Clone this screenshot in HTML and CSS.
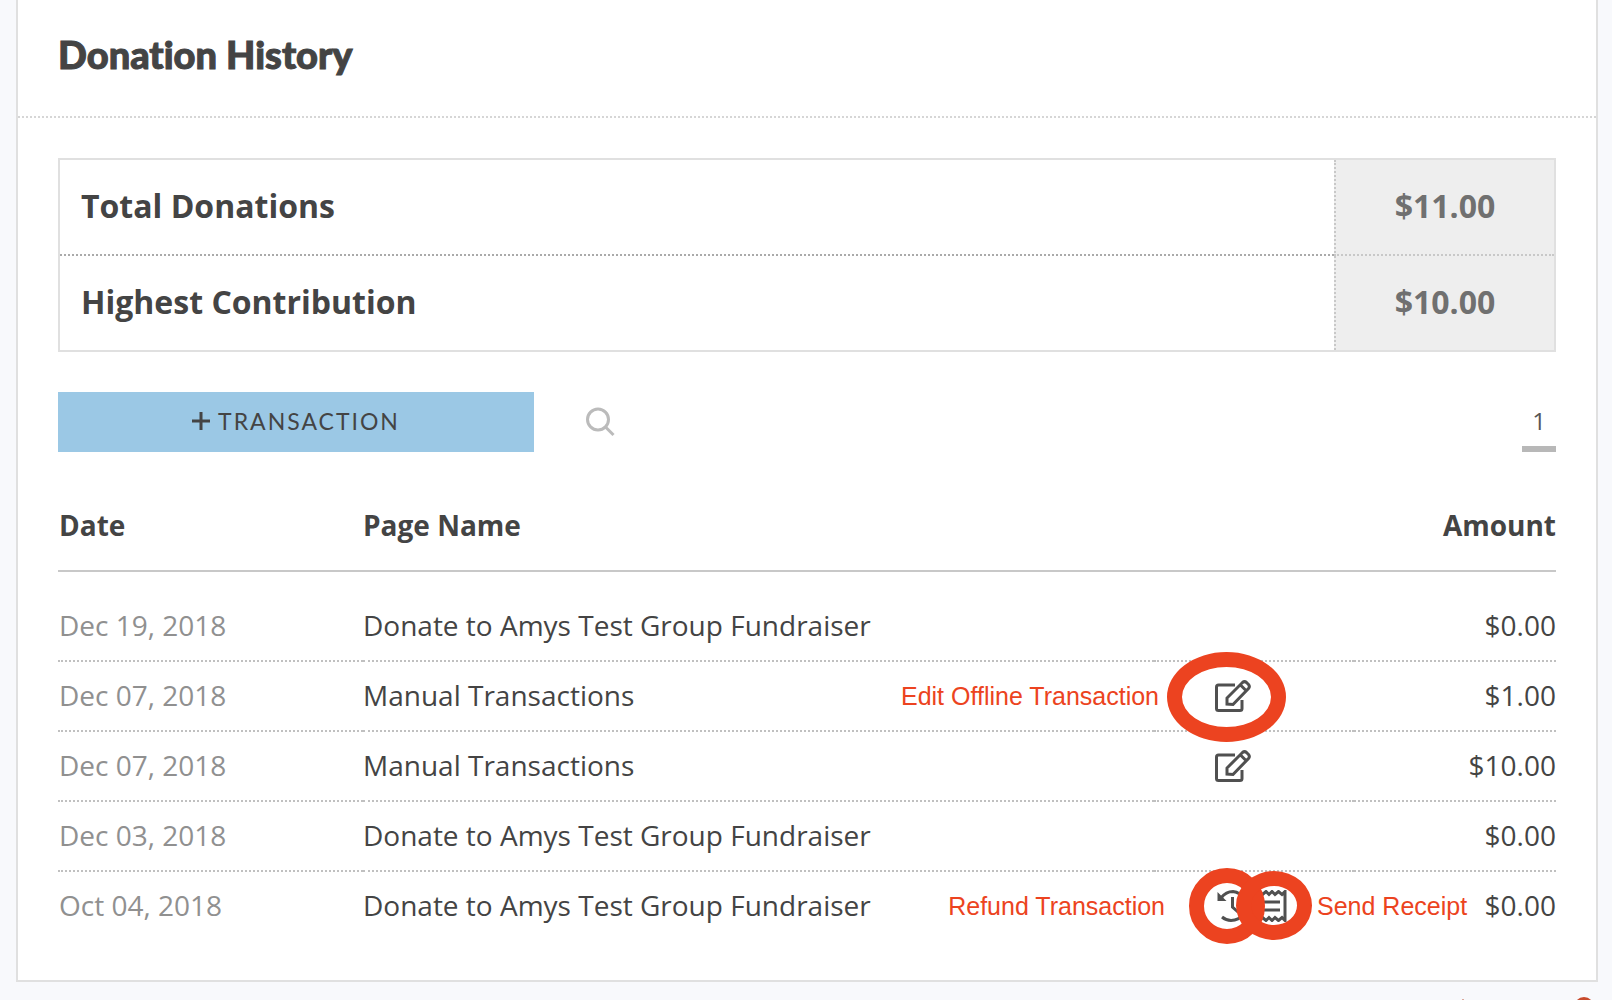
FILE: index.html
```html
<!DOCTYPE html>
<html lang="en">
<head>
  <meta charset="UTF-8">
  <meta name="viewport" content="width=device-width, initial-scale=1.0">
  <title>Donation History</title>
  <link rel="stylesheet" href="styles.css">
</head>
<body>
  <svg class="sprite" aria-hidden="true">
    <symbol id="icon-edit" viewBox="0 0 36 32">
      <path d="M20 5H3.500Q1.500 5 1.500 7V28.500Q1.500 30.500 3.500 30.500H25Q27 30.500 27 28.500V20" />
      <path d="M12 24V18L27.500 2.500Q29.500 .800 31.500 2.500L33.500 4.500Q35.200 6.500 33.500 8.500L18 24.500Z M25.500 5L31 10.500" />
    </symbol>
    <symbol id="icon-refund" viewBox="-2 0 34 32">
      <path d="M4 8Q9 1.500 16 1.500A14.500 14.500 0 1 1 5 27" />
      <path d="M15.500 7V17L21 22" />
      <path class="solid" d="M.500 2V11H9.500Z" />
    </symbol>
    <symbol id="icon-receipt" viewBox="0 0 30 32">
      <path d="M2 1.500L5.500 4.500L9 1.500L12 4.500L15 1.500L18 4.500L21.500 1.500L25 4.500L28 1.500V30.500L25 27.500L21.500 30.500L18 27.500L15 30.500L12 27.500L9 30.500L5.500 27.500L2 30.500Z" />
      <path d="M7 12H23M7 20H23" />
    </symbol>
  </svg>

  <main class="card">
    <header class="card-header">
      <h1>Donation History</h1>
    </header>

    <div class="card-body">
      <table class="summary">
        <tr>
          <th scope="row">Total Donations</th>
          <td>$11.00</td>
        </tr>
        <tr>
          <th scope="row">Highest Contribution</th>
          <td>$10.00</td>
        </tr>
      </table>

      <div class="toolbar">
        <button class="add-btn" type="button">
          <svg class="plus" viewBox="0 0 18 18" aria-hidden="true"><path d="M9 0V18M0 9H18" /></svg>
          TRANSACTION
        </button>
        <button class="search-btn" type="button" aria-label="Search">
          <svg viewBox="0 0 30 30" aria-hidden="true"><circle cx="12" cy="12.500" r="10.500" /><path d="M19.500 20L27.500 28" /></svg>
        </button>
        <nav class="pager">
          <a href="#">1</a>
        </nav>
      </div>

      <table class="history">
        <thead>
          <tr>
            <th class="date">Date</th>
            <th class="page">Page Name</th>
            <th class="actions"></th>
            <th class="amount">Amount</th>
          </tr>
        </thead>
        <tbody>
          <tr>
            <td class="date">Dec 19, 2018</td>
            <td class="page">Donate to Amys Test Group Fundraiser</td>
            <td class="actions"></td>
            <td class="amount">$0.00</td>
          </tr>
          <tr>
            <td class="date">Dec 07, 2018</td>
            <td class="page">Manual Transactions</td>
            <td class="actions">
              <div class="action-list">
                <button type="button" aria-label="Edit"><svg class="icon edit"><use href="#icon-edit" /></svg></button>
                <span class="ring ring-edit"></span>
                <span class="note note-edit">Edit Offline Transaction</span>
              </div>
            </td>
            <td class="amount">$1.00</td>
          </tr>
          <tr>
            <td class="date">Dec 07, 2018</td>
            <td class="page">Manual Transactions</td>
            <td class="actions">
              <div class="action-list">
                <button type="button" aria-label="Edit"><svg class="icon edit"><use href="#icon-edit" /></svg></button>
              </div>
            </td>
            <td class="amount">$10.00</td>
          </tr>
          <tr>
            <td class="date">Dec 03, 2018</td>
            <td class="page">Donate to Amys Test Group Fundraiser</td>
            <td class="actions"></td>
            <td class="amount">$0.00</td>
          </tr>
          <tr>
            <td class="date">Oct 04, 2018</td>
            <td class="page">Donate to Amys Test Group Fundraiser</td>
            <td class="actions">
              <div class="action-list">
                <button type="button" aria-label="Refund"><svg class="icon refund"><use href="#icon-refund" /></svg></button>
                <button type="button" aria-label="Send receipt"><svg class="icon receipt"><use href="#icon-receipt" /></svg></button>
                <span class="ring ring-refund"></span>
                <span class="ring ring-receipt"></span>
                <span class="note note-refund">Refund Transaction</span>
                <span class="note note-receipt">Send Receipt</span>
              </div>
            </td>
            <td class="amount">$0.00</td>
          </tr>
        </tbody>
      </table>
    </div>
  </main>

  <footer class="footer">
    <span class="tick"></span>
    <span class="badge"></span>
  </footer>
</body>
</html>
```
FILE: styles.css
```css
* {
  box-sizing: border-box;
}

body {
  margin: 0;
  background-color: #f8f9fc;
  color: #444;
  font-family: "Open Sans", Arial, sans-serif;
  font-size: 28px;
  line-height: 38px;
}

button {
  padding: 0;
  border: none;
  background: none;
  color: inherit;
  cursor: pointer;
}

svg {
  display: block;
  fill: none;
  stroke: #505050;
  stroke-width: 3px;
}

.sprite {
  position: absolute;
  width: 0;
  height: 0;
}

.solid {
  fill: #505050;
  stroke: none;
}

.card {
  margin: 0 14px 0 16px;
  background-color: #fff;
  border: 2px solid #e0e0e0;
  border-top: none;
}

.card-header {
  padding: 30px 40px 38px;
  border-bottom: 2px dotted #d6d6d6;
}

h1 {
  margin: 0;
  font-family: "Lato Black", Lato, sans-serif;
  font-size: 38px;
  font-weight: 900;
  font-variant-ligatures: none;
  line-height: 48px;
  -webkit-text-stroke: 1px #444;
}

.card-body {
  padding: 40px;
}

table {
  width: 100%;
  border-spacing: 0;
}

th, td {
  padding: 0;
  text-align: left;
}

.summary {
  border: 2px solid #e0e0e0;
  font-size: 32px;
}

.summary th, .summary td {
  height: 94px;
  padding-bottom: 2px;
  font-weight: bold;
}

.summary th {
  padding-left: 21px;
}

.summary td {
  width: 220px;
  background-color: #eee;
  border-left: 2px dotted #c8c8c8;
  color: #707070;
  text-align: center;
}

.summary tr:first-child th {
  height: 96px;
  border-bottom: 2px dotted #aaa;
}

.summary tr:first-child td {
  border-bottom: 2px dotted #c8c8c8;
}

.toolbar {
  display: flex;
  align-items: center;
  margin-top: 40px;
}

.add-btn {
  display: flex;
  align-items: center;
  justify-content: center;
  gap: 8px;
  width: 476px;
  height: 60px;
  padding-bottom: 2px;
  background-color: #9bc8e5;
  font-family: Lato, sans-serif;
  font-size: 23px;
  letter-spacing: 2px;
}

.plus {
  width: 18px;
  height: 18px;
  stroke: #444;
}

.search-btn {
  margin-left: 52px;
}

.search-btn svg {
  width: 30px;
  height: 30px;
  stroke: #bbb;
}

.pager {
  margin-left: auto;
}

.pager a {
  display: block;
  width: 34px;
  height: 60px;
  border-bottom: 6px solid #b8b8b8;
  color: #555;
  font-size: 24px;
  line-height: 58px;
  text-align: center;
  text-decoration: none;
}

.history {
  margin-top: 40px;
}

.history thead th {
  height: 80px;
  padding-bottom: 12px;
  border-bottom: 2px solid #c8c8c8;
}

/* space between the header rule and the first row */
.history tbody::before {
  content: "";
  display: block;
  height: 20px;
}

.history tbody td {
  height: 70px;
  padding-bottom: 2px;
  border-bottom: 2px dotted #c0c0c0;
}

.history tbody tr:last-child td {
  height: 68px;
  border-bottom: none;
}

.history .date {
  width: 305px;
  padding-left: 1px;
}

.history td.date {
  color: #909090;
}

.history .actions {
  width: 200px;
}

.history tbody .actions {
  padding-bottom: 0;
}

.history .amount {
  width: 202px;
  text-align: right;
}

.action-list {
  position: relative;
  display: flex;
  gap: 8px;
  padding-left: 61px;
}

.icon {
  height: 32px;
}

.edit {
  width: 36px;
}

.refund {
  width: 34px;
}

.receipt {
  width: 30px;
}

/* callouts drawn over the row */
.ring {
  position: absolute;
  border: 15px solid #ec4320;
  border-radius: 50%;
}

.ring-edit {
  top: -28px;
  left: 13px;
  width: 119px;
  height: 90px;
}

.ring-refund {
  top: -22px;
  left: 35px;
  width: 76px;
  height: 76px;
}

.ring-receipt {
  top: -19px;
  left: 82px;
  width: 76px;
  height: 69px;
}

.note {
  position: absolute;
  top: 0;
  color: #ec4320;
  font-family: "Liberation Sans", Arial, sans-serif;
  font-size: 25px;
  line-height: 32px;
  white-space: nowrap;
}

.note-edit {
  right: 195px;
}

.note-refund {
  right: 189px;
}

.note-receipt {
  left: 163px;
}

.footer {
  display: flex;
  justify-content: flex-end;
  gap: 110px;
  height: 18px;
  padding: 15px 18px 0;
  overflow: hidden;
}

.tick {
  width: 2px;
  margin-top: 2px;
  background-color: #d9a99c;
}

.badge {
  flex: none;
  width: 20px;
  height: 20px;
  border-radius: 50%;
  background-color: #c84a2c;
}
```
